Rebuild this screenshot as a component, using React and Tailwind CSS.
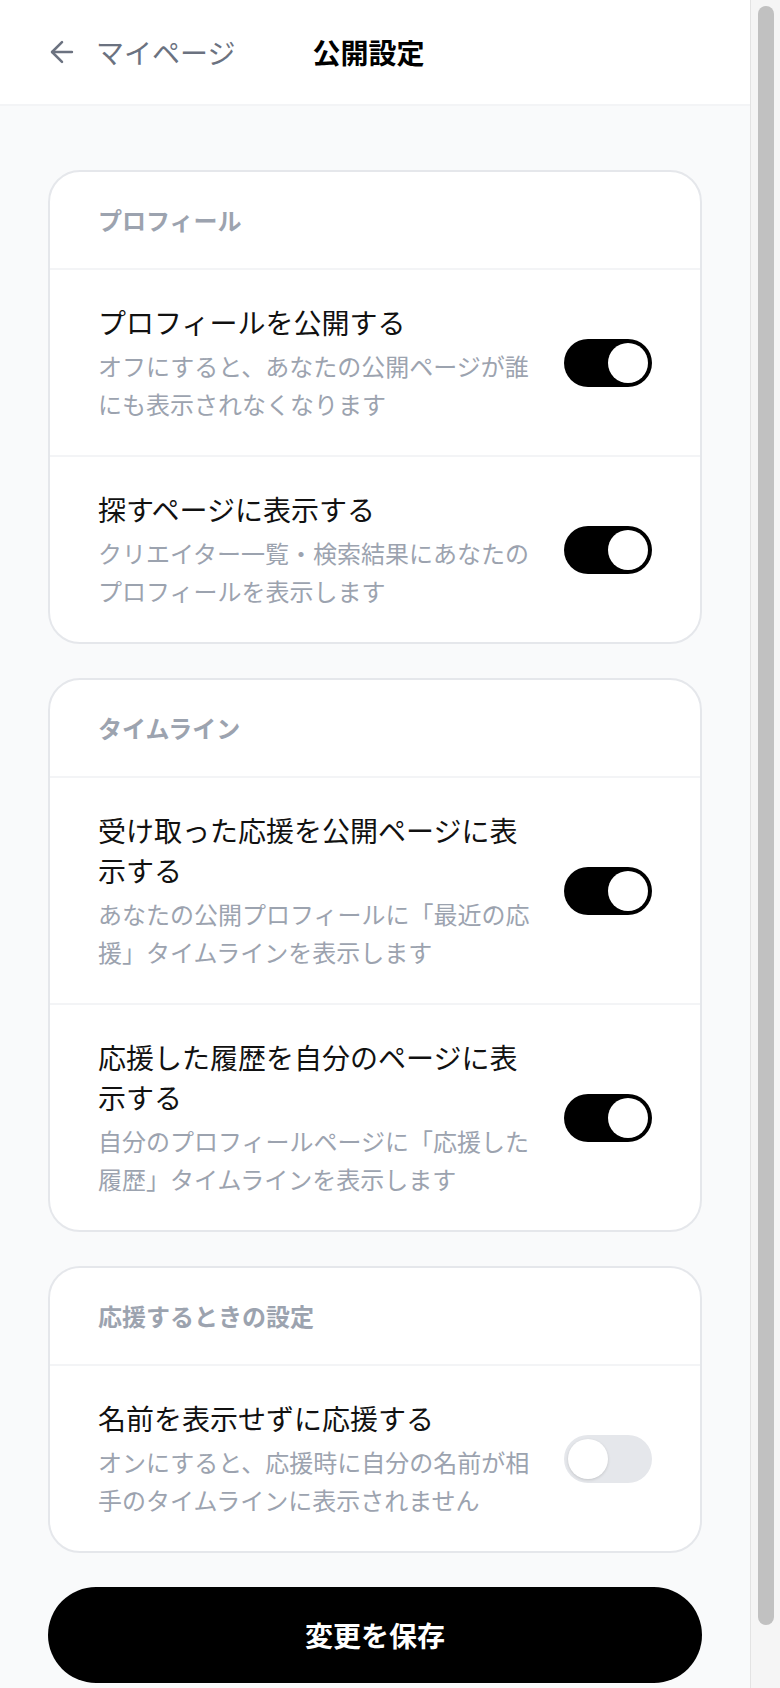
import React, { useState } from 'react';
import { ArrowLeft } from 'lucide-react';

const sections = [
  {
    title: 'プロフィール',
    items: [
      { id: 'public', label: 'プロフィールを公開する', desc: 'オフにすると、あなたの公開ページが誰にも表示されなくなります', on: true },
      { id: 'explore', label: '探すページに表示する', desc: 'クリエイター一覧・検索結果にあなたのプロフィールを表示します', on: true },
    ],
  },
  {
    title: 'タイムライン',
    items: [
      { id: 'received', label: '受け取った応援を公開ページに表示する', desc: 'あなたの公開プロフィールに「最近の応援」タイムラインを表示します', on: true },
      { id: 'history', label: '応援した履歴を自分のページに表示する', desc: '自分のプロフィールページに「応援した履歴」タイムラインを表示します', on: true },
    ],
  },
  {
    title: '応援するときの設定',
    items: [
      { id: 'anon', label: '名前を表示せずに応援する', desc: 'オンにすると、応援時に自分の名前が相手のタイムラインに表示されません', on: false },
    ],
  },
];

const Toggle = ({ on, onClick }) => (
  <button
    onClick={onClick}
    className={`shrink-0 w-[88px] h-[48px] rounded-full p-[4px] flex items-center ${on ? 'bg-black justify-end' : 'bg-[#e5e7eb] justify-start'}`}
  >
    <span className={`block w-[40px] h-[40px] rounded-full bg-white ${on ? '' : 'shadow-[0_1px_3px_rgba(0,0,0,0.15)]'}`} />
  </button>
);

export default function App() {
  const initial = {};
  sections.forEach((s) => s.items.forEach((i) => (initial[i.id] = i.on)));
  const [values, setValues] = useState(initial);

  return (
    <div className="h-screen flex overflow-hidden bg-[#f9fafb] font-['Noto_Sans_CJK_JP',sans-serif]">
      <div className="w-[750px] shrink-0 h-full overflow-hidden">
        <header className="h-[106px] bg-white border-b-2 border-[#f3f4f6] flex items-center pl-[45px]">
          <button className="flex items-center gap-[17px] text-[#6b7280]">
            <ArrowLeft size={34} strokeWidth={1.8} />
            <span className="text-[28px] leading-10">マイページ</span>
          </button>
          <h1 className="ml-[77px] text-[28px] leading-10 font-bold text-black">公開設定</h1>
        </header>

        <main className="px-12 pt-16 pb-16 flex flex-col gap-[34px]">
          {sections.map((section) => (
            <section key={section.title} className="bg-white rounded-[32px] border-2 border-[#e5e7eb] overflow-hidden">
              <div className="px-12 py-8 text-[24px] leading-8 font-bold text-[#9ca3af] border-b-2 border-[#f3f4f6]">
                {section.title}
              </div>
              <div className="divide-y-2 divide-[#f3f4f6]">
                {section.items.map((item) => (
                  <div key={item.id} className="px-12 py-8 flex items-center gap-8">
                    <div className="flex-1 min-w-0">
                      <div className="text-[28px] leading-10 text-[#111111]">{item.label}</div>
                      <p className="mt-[5px] text-[24px] leading-[38px] text-[#9ca3af]">{item.desc}</p>
                    </div>
                    <Toggle
                      on={values[item.id]}
                      onClick={() => setValues({ ...values, [item.id]: !values[item.id] })}
                    />
                  </div>
                ))}
              </div>
            </section>
          ))}

          <button className="h-24 w-full rounded-full bg-black text-white text-[28px] font-bold">
            変更を保存
          </button>
        </main>
      </div>

      {/* scrollbar strip */}
      <div className="w-[30px] shrink-0 h-full bg-[#f5f5f5] border-l border-[#e3e3e3] pl-[7px] pr-[6px] pt-[6px]">
        <div className="w-4 h-[1619px] rounded-full bg-[#c1c1c1]" />
      </div>
    </div>
  );
}
